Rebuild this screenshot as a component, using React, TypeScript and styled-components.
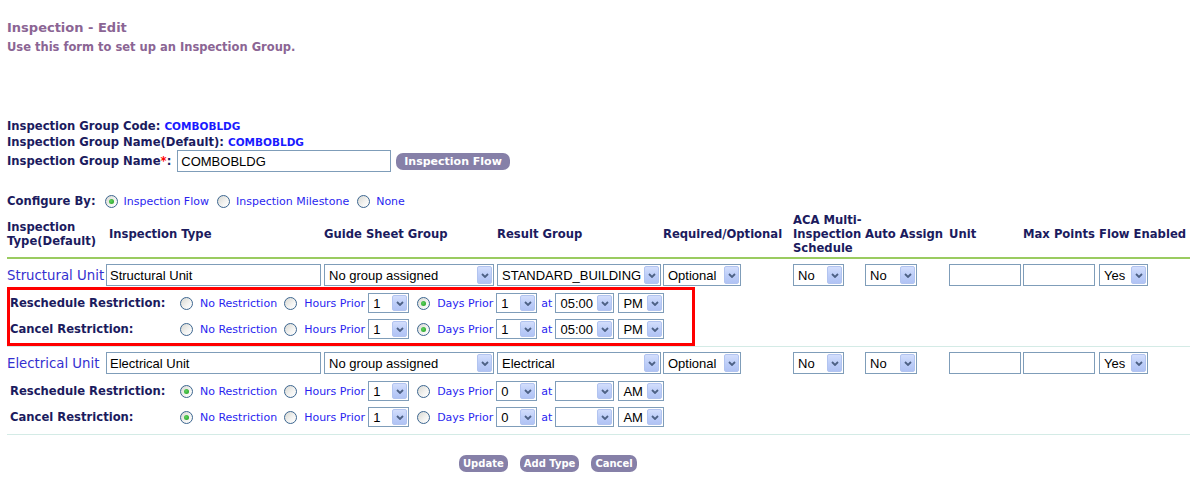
import React from "react";
import styled, { createGlobalStyle, css } from "styled-components";

const GlobalStyle = createGlobalStyle`
  html, body { margin: 0; padding: 0; background: #ffffff; }
  body { font-family: "DejaVu Sans", Verdana, sans-serif; }
`;

const NAVY = "#1b1b5e";
const BLUE = "#2a1ff0";
const BTN = "#8680a8";

const Page = styled.div`
  width: 1192px;
  height: 478px;
  box-sizing: border-box;
  padding: 20px 2px 0 7px;
  overflow: hidden;
`;

const Title = styled.div`
  font-weight: bold;
  font-size: 13px;
  line-height: 16px;
  color: #8b6594;
`;

const Subtitle = styled.div`
  font-weight: bold;
  font-size: 11.5px;
  line-height: 16px;
  color: #8b6594;
  margin-top: 3px;
`;

const InfoBlock = styled.div`
  margin-top: 62px;
  display: flex;
  flex-direction: column;
`;

const InfoRow = styled.div<{ $h: number }>`
  display: flex;
  align-items: center;
  height: ${(p) => p.$h}px;
  white-space: nowrap;
`;

const Label = styled.span`
  font-weight: bold;
  font-size: 11.6px;
  color: ${NAVY};
`;

const Req = styled.span`
  color: #ff0000;
`;

const Value = styled.span`
  font-weight: bold;
  font-size: 10.5px;
  color: #1a1aff;
`;

const TextInput = styled.input<{ $w: number }>`
  width: ${(p) => p.$w}px;
  height: 22px;
  box-sizing: border-box;
  border: 1px solid #7f9db9;
  padding: 0 3px;
  margin: 0;
  font-family: "Liberation Sans", Arial, sans-serif;
  font-size: 13px;
  color: #000;
  background: #fff;
  outline: none;
`;

const NameInput = styled(TextInput)`
  margin-left: 6px;
`;

const PillButton = styled.span<{ $large?: boolean }>`
  display: inline-flex;
  align-items: center;
  height: 17px;
  padding: 0 ${(p) => (p.$large ? 8 : 4)}px;
  margin-left: ${(p) => (p.$large ? 5 : 0)}px;
  border-radius: 7px;
  background: ${BTN};
  color: #ffffff;
  font-weight: bold;
  font-size: ${(p) => (p.$large ? 11 : 10)}px;
  white-space: nowrap;
`;

const ConfigRow = styled.div`
  display: flex;
  align-items: center;
  height: 18px;
  margin-top: 20px;
`;

const RadioGroup = styled.div`
  display: flex;
  align-items: center;
  margin-left: 9px;
`;

const Option = styled.label<{ $gap: number; $after: number }>`
  display: inline-flex;
  align-items: center;
  gap: ${(p) => p.$gap}px;
  margin-right: ${(p) => p.$after}px;
  white-space: nowrap;
`;

const Radio = styled.span<{ $checked?: boolean }>`
  width: 13px;
  height: 13px;
  box-sizing: border-box;
  border-radius: 50%;
  border: 1px solid #3c6690;
  background: linear-gradient(135deg, #d8d8d2 0%, #f4f4f2 60%, #ffffff 100%);
  display: inline-flex;
  align-items: center;
  justify-content: center;
  flex: none;
  &::after {
    content: "";
    width: 5px;
    height: 5px;
    border-radius: 50%;
    background: radial-gradient(circle at 40% 40%, #5fd35f, #1f9a1f);
    display: ${(p) => (p.$checked ? "block" : "none")};
  }
`;

const OptionText = styled.span`
  font-size: 11px;
  color: ${BLUE};
`;

const columns = css`
  display: grid;
  grid-template-columns: 99px 218px 173px 166px 130px 72px 84px 74px 76px 91px;
  align-items: center;
`;

const HeaderRow = styled.div`
  ${columns};
  margin-top: 3px;
  height: 42px;
`;

const HeaderCell = styled.div<{ $pl?: number }>`
  font-weight: bold;
  font-size: 11.6px;
  line-height: 14px;
  color: ${NAVY};
  white-space: nowrap;
  padding-left: ${(p) => p.$pl ?? 0}px;
`;

const GreenRule = styled.div`
  margin-top: 2px;
  height: 2px;
  background: #9acb60;
`;

const DataRow = styled.div`
  ${columns};
  padding: 5px 0 1px;
`;

const RowLink = styled.span`
  font-size: 13.3px;
  color: #3430d0;
  white-space: nowrap;
`;

const SelectBox = styled.span<{ $w: number; $h: number }>`
  display: inline-flex;
  align-items: stretch;
  width: ${(p) => p.$w}px;
  height: ${(p) => p.$h}px;
  box-sizing: border-box;
  border: 1px solid #7f9db9;
  background: #fff;
  flex: none;
`;

const SelectText = styled.span`
  flex: 1;
  display: flex;
  align-items: center;
  padding-left: 4px;
  font-family: "Liberation Sans", Arial, sans-serif;
  font-size: 13px;
  color: #000;
  white-space: nowrap;
  overflow: hidden;
`;

const ArrowBtn = styled.span`
  width: 15px;
  margin: 1px;
  box-sizing: border-box;
  border: 1px solid #b2c4f0;
  border-radius: 2px;
  background: linear-gradient(180deg, #d3defc 0%, #bccdf8 55%, #b1c3f4 100%);
  display: flex;
  align-items: center;
  justify-content: center;
`;

const Select: React.FC<{ w: number; h?: number; value?: string }> = ({ w, h = 22, value = "" }) => (
  <SelectBox $w={w} $h={h}>
    <SelectText>{value}</SelectText>
    <ArrowBtn>
      <svg width="8" height="5" viewBox="0 0 8 5">
        <polyline points="1,1 4,4 7,1" fill="none" stroke="#4d6185" strokeWidth="1.8" />
      </svg>
    </ArrowBtn>
  </SelectBox>
);

const RestrictionBlock = styled.div<{ $highlight?: boolean }>`
  width: 688px;
  box-sizing: border-box;
  border: 3px solid ${(p) => (p.$highlight ? "#ff0000" : "transparent")};
  padding-bottom: 1px;
`;

const RestrictionRow = styled.div`
  display: flex;
  align-items: center;
  height: 26px;
`;

const RestrictionLabel = styled.span`
  width: 170px;
  flex: none;
  font-weight: bold;
  font-size: 11.6px;
  color: ${NAVY};
  white-space: nowrap;
`;

const Spacer = styled.span<{ $w: number }>`
  width: ${(p) => p.$w}px;
  flex: none;
`;

const Separator = styled.div`
  height: 1px;
  background: #d4ebe6;
`;

const ButtonRow = styled.div`
  display: flex;
  align-items: center;
  gap: 12px;
  margin-top: 20px;
  padding-left: 452px;
`;

type Restr = { mode: "none" | "hours" | "days"; hours: string; days: string; time: string; ampm: string };

const Restriction: React.FC<{ label: string; r: Restr }> = ({ label, r }) => (
  <RestrictionRow>
    <RestrictionLabel>{label}</RestrictionLabel>
    <Option $gap={7} $after={7}>
      <Radio $checked={r.mode === "none"} />
      <OptionText>No Restriction</OptionText>
    </Option>
    <Option $gap={7} $after={3}>
      <Radio $checked={r.mode === "hours"} />
      <OptionText>Hours Prior</OptionText>
    </Option>
    <Select w={41} h={20} value={r.hours} />
    <Spacer $w={8} />
    <Option $gap={7} $after={3}>
      <Radio $checked={r.mode === "days"} />
      <OptionText>Days Prior</OptionText>
    </Option>
    <Select w={41} h={20} value={r.days} />
    <Spacer $w={4} />
    <OptionText>at</OptionText>
    <Spacer $w={3} />
    <Select w={59} h={20} value={r.time} />
    <Spacer $w={4} />
    <Select w={46} h={20} value={r.ampm} />
  </RestrictionRow>
);

type Item = {
  name: string;
  result: string;
  highlight: boolean;
  resched: Restr;
  cancel: Restr;
};

const items: Item[] = [
  {
    name: "Structural Unit",
    result: "STANDARD_BUILDING",
    highlight: true,
    resched: { mode: "days", hours: "1", days: "1", time: "05:00", ampm: "PM" },
    cancel: { mode: "days", hours: "1", days: "1", time: "05:00", ampm: "PM" },
  },
  {
    name: "Electrical Unit",
    result: "Electrical",
    highlight: false,
    resched: { mode: "none", hours: "1", days: "0", time: "", ampm: "AM" },
    cancel: { mode: "none", hours: "1", days: "0", time: "", ampm: "AM" },
  },
];

export default function App() {
  return (
    <>
      <GlobalStyle />
      <Page>
        <Title>Inspection - Edit</Title>
        <Subtitle>Use this form to set up an Inspection Group.</Subtitle>

        <InfoBlock>
          <InfoRow $h={17}>
            <Label>Inspection Group Code:&nbsp;</Label>
            <Value>COMBOBLDG</Value>
          </InfoRow>
          <InfoRow $h={16}>
            <Label>Inspection Group Name(Default):&nbsp;</Label>
            <Value>COMBOBLDG</Value>
          </InfoRow>
          <InfoRow $h={22}>
            <Label>
              Inspection Group Name<Req>*</Req>:
            </Label>
            <NameInput $w={214} defaultValue="COMBOBLDG" />
            <PillButton $large>Inspection Flow</PillButton>
          </InfoRow>
        </InfoBlock>

        <ConfigRow>
          <Label>Configure By:</Label>
          <RadioGroup>
            <Option $gap={6} $after={8}>
              <Radio $checked />
              <OptionText>Inspection Flow</OptionText>
            </Option>
            <Option $gap={6} $after={8}>
              <Radio />
              <OptionText>Inspection Milestone</OptionText>
            </Option>
            <Option $gap={6} $after={0}>
              <Radio />
              <OptionText>None</OptionText>
            </Option>
          </RadioGroup>
        </ConfigRow>

        <HeaderRow>
          <HeaderCell>
            Inspection
            <br />
            Type(Default)
          </HeaderCell>
          <HeaderCell $pl={3}>Inspection Type</HeaderCell>
          <HeaderCell>Guide Sheet Group</HeaderCell>
          <HeaderCell>Result Group</HeaderCell>
          <HeaderCell>Required/Optional</HeaderCell>
          <HeaderCell>
            ACA Multi-
            <br />
            Inspection
            <br />
            Schedule
          </HeaderCell>
          <HeaderCell>Auto Assign</HeaderCell>
          <HeaderCell>Unit</HeaderCell>
          <HeaderCell>Max Points</HeaderCell>
          <HeaderCell>Flow Enabled</HeaderCell>
        </HeaderRow>
        <GreenRule />

        {items.map((it) => (
          <React.Fragment key={it.name}>
            <DataRow>
              <RowLink>{it.name}</RowLink>
              <TextInput $w={215} defaultValue={it.name} />
              <Select w={170} value="No group assigned" />
              <Select w={164} value={it.result} />
              <Select w={78} value="Optional" />
              <Select w={51} value="No" />
              <Select w={52} value="No" />
              <TextInput $w={72} defaultValue="" />
              <TextInput $w={72} defaultValue="" />
              <Select w={49} value="Yes" />
            </DataRow>
            <RestrictionBlock $highlight={it.highlight}>
              <Restriction label="Reschedule Restriction:" r={it.resched} />
              <Restriction label="Cancel Restriction:" r={it.cancel} />
            </RestrictionBlock>
            <Separator />
          </React.Fragment>
        ))}

        <ButtonRow>
          <PillButton>Update</PillButton>
          <PillButton>Add Type</PillButton>
          <PillButton>Cancel</PillButton>
        </ButtonRow>
      </Page>
    </>
  );
}
